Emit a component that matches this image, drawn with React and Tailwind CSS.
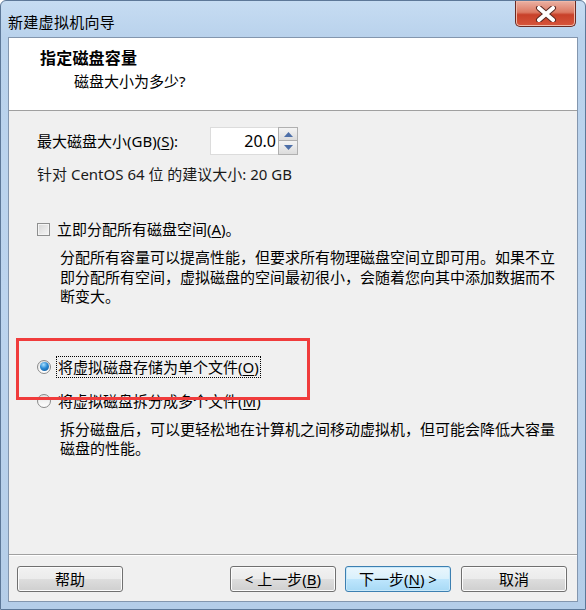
import React from 'react';

const font = { fontFamily: '"Noto Sans", "Noto Sans CJK SC", sans-serif' };

function U({ children }) {
  return <span className="underline underline-offset-2">{children}</span>;
}

function WinButton({ children, primary }) {
  return (
    <div
      className={`w-[106px] h-[26px] rounded-[3px] border flex items-center justify-center text-[15px] text-black ${
        primary
          ? 'border-[#3c7fb1] bg-[linear-gradient(#eaf6fd_0%,#d9f0fc_50%,#bee6fd_51%,#a7d9f5_100%)] shadow-[inset_0_0_0_1px_#c8e8f9]'
          : 'border-[#707070] bg-[linear-gradient(#f2f2f2_0%,#ebebeb_50%,#dddddd_51%,#cfcfcf_100%)] shadow-[inset_0_0_0_1px_#fcfcfc]'
      }`}
    >
      {children}
    </div>
  );
}

function Radio({ checked }) {
  return (
    <div className="w-[14px] h-[14px] rounded-full border border-[#8a8a8a] bg-[linear-gradient(#e2e2e2,#ffffff)] flex items-center justify-center shrink-0">
      {checked && (
        <div className="w-[9px] h-[9px] rounded-full bg-[radial-gradient(circle_at_40%_30%,#a8e0ff_0%,#2a8ad4_45%,#0d4f8f_100%)]" />
      )}
    </div>
  );
}

export default function App() {
  return (
    <div
      className="relative w-[586px] h-[610px] bg-[linear-gradient(180deg,#c6dcf2_0%,#b9d2ec_6%,#bcd4ee_50%,#b4cde8_100%)] border border-[#5d7898] rounded-t-[6px] flex flex-col overflow-hidden"
      style={font}
    >
      {/* title bar */}
      <div className="h-[36px] flex items-start justify-between">
        <div className="pl-[7px] pt-[11px] text-[15px] leading-[20px] tracking-[0.3px] text-black">新建虚拟机向导</div>
        <div className="mr-[9px] w-[61px] h-[26px] rounded-b-[5px] border border-t-0 border-[#6b2a22] bg-[linear-gradient(#eab1a3_0%,#dc7a64_45%,#c8412a_55%,#d7553b_100%)] shadow-[inset_0_0_0_1px_#f0b8a8] flex items-center justify-center">
          <svg width="22" height="16" viewBox="0 0 22 16">
            <path d="M4 2 L18 14 M18 2 L4 14" stroke="#5a2a24" strokeWidth="6" strokeLinecap="round" />
            <path d="M4 2 L18 14 M18 2 L4 14" stroke="#ffffff" strokeWidth="4" strokeLinecap="round" />
          </svg>
        </div>
      </div>

      {/* client area */}
      <div className="mx-[7px] mb-[7px] flex-1 border border-[#8396ae] bg-[#f0f0f0] flex flex-col">
        {/* header */}
        <div className="h-[73px] bg-white border-b border-[#a0a0a0]">
          <div className="pl-[31px] pt-[10px] text-[16px] leading-[20px] font-bold tracking-[0.2px] text-black">指定磁盘容量</div>
          <div className="pl-[65px] mt-[3px] text-[15px] leading-[20px] text-black">磁盘大小为多少?</div>
        </div>

        {/* content */}
        <div className="pl-[28px] text-[15px] text-black">
          <div className="mt-[16px] flex items-center h-[28px]">
            <div className="w-[173px] leading-[20px]">
              最大磁盘大小(GB)(<U>S</U>):
            </div>
            <div className="flex h-[28px]">
              <div className="w-[68px] h-[28px] bg-white border border-[#dcdcdc] border-r-0 flex items-center justify-end pr-[2px] text-[16px]">
                20.0
              </div>
              <div className="flex flex-col w-[20px]">
                <div className="h-[14px] border border-[#b0b0b0] bg-[linear-gradient(#f4f4f4,#dcdcdc)] flex items-center justify-center">
                  <svg width="9" height="5" viewBox="0 0 9 5"><path d="M4.5 0 L9 5 L0 5 Z" fill="#4d6fa8" /></svg>
                </div>
                <div className="h-[14px] border border-t-0 border-[#b0b0b0] bg-[linear-gradient(#f4f4f4,#dcdcdc)] flex items-center justify-center">
                  <svg width="9" height="5" viewBox="0 0 9 5"><path d="M0 0 L9 0 L4.5 5 Z" fill="#4d6fa8" /></svg>
                </div>
              </div>
            </div>
          </div>

          <div className="mt-[9px] leading-[20px] text-[#1a1a1a]">针对 CentOS 64 位 的建议大小: 20 GB</div>

          <div className="mt-[35px] flex items-center gap-[7px] h-[20px]">
            <div className="w-[13px] h-[13px] border border-[#8e8f8f] bg-[linear-gradient(135deg,#d6d6d6,#f6f6f6)] shadow-[inset_0_0_0_1px_#f4f4f4] shrink-0" />
            <div className="leading-[20px]">
              立即分配所有磁盘空间(<U>A</U>)。
            </div>
          </div>

          <div className="mt-[9px] pl-[23px] leading-[19.5px] whitespace-nowrap">
            分配所有容量可以提高性能，但要求所有物理磁盘空间立即可用。如果不立
            <br />
            即分配所有空间，虚拟磁盘的空间最初很小，会随着您向其中添加数据而不
            <br />
            断变大。
          </div>

          <div className="mt-[49px] flex items-center gap-[5px] h-[22px]">
            <Radio checked />
            <div className="border border-dotted border-black px-[1px] leading-[20px]">
              将虚拟磁盘存储为单个文件(<U>O</U>)
            </div>
          </div>

          <div className="mt-[13px] flex items-center gap-[6px] h-[20px]">
            <Radio />
            <div className="leading-[20px] pl-[1px]">
              将虚拟磁盘拆分成多个文件(<U>M</U>)
            </div>
          </div>

          <div className="mt-[9px] pl-[23px] leading-[19px] whitespace-nowrap">
            拆分磁盘后，可以更轻松地在计算机之间移动虚拟机，但可能会降低大容量
            <br />
            磁盘的性能。
          </div>
        </div>

        {/* footer */}
        <div className="mt-auto border-t border-[#a0a0a0] shadow-[inset_0_1px_0_#ffffff] pt-[11px] pb-[9px] pl-[8px] pr-[10px] flex justify-between">
          <WinButton>帮助</WinButton>
          <div className="flex gap-[9px]">
            <WinButton>&lt; 上一步(<U>B</U>)</WinButton>
            <WinButton primary>下一步(<U>N</U>) &gt;</WinButton>
            <div className="ml-[1px]">
              <WinButton>取消</WinButton>
            </div>
          </div>
        </div>
      </div>

      {/* red annotation box */}
      <div className="absolute left-[15px] top-[337px] w-[294px] h-[62px] border-[3px] border-[#f03c3c]" />
    </div>
  );
}
